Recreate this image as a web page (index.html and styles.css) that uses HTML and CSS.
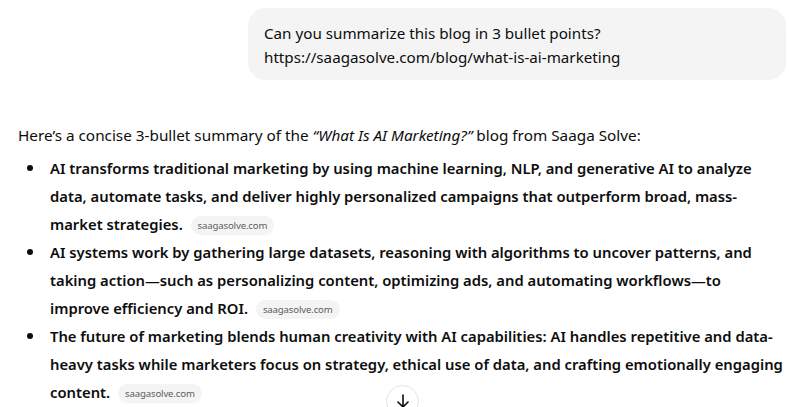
FILE: index.html
```html
<!DOCTYPE html>
<html lang="en">
<head>
<meta charset="utf-8">
<title>Chat</title>
<link rel="stylesheet" href="styles.css">
</head>
<body>
<main class="thread">
  <div class="user-row">
    <div class="bubble">Can you summarize this blog in 3 bullet points?<br>https://saagasolve.com/blog/what-is-ai-marketing</div>
  </div>
  <div class="answer">
    <p class="intro">Here’s a concise 3-bullet summary of the <em>“What Is AI Marketing?”</em> blog from Saaga Solve:</p>
    <ul class="points">
      <li><strong>AI transforms traditional marketing by using machine learning, NLP, and generative AI to analyze data, automate tasks, and deliver highly personalized campaigns that outperform broad, mass-market strategies.</strong> <span class="cite">saagasolve.com</span></li>
      <li><strong>AI systems work by gathering large datasets, reasoning with algorithms to uncover patterns, and taking action—such as personalizing content, optimizing ads, and automating workflows—to <span class="nowrap">improve efficiency</span> and ROI.</strong> <span class="cite">saagasolve.com</span></li>
      <li><strong>The future of marketing blends human creativity with AI capabilities: AI handles repetitive and data-heavy tasks while marketers focus on strategy, ethical use of data, and crafting emotionally engaging content.</strong> <span class="cite">saagasolve.com</span></li>
    </ul>
  </div>
  <button class="scroll-down" aria-label="Scroll down">
    <svg width="18" height="18" viewBox="0 0 18 18" fill="none" stroke="#0d0d0d" stroke-width="1.6" stroke-linecap="round" stroke-linejoin="round"><path d="M9 3v12M4 10l5 5 5-5"/></svg>
  </button>
</main>
</body>
</html>
```
FILE: styles.css
```css
* { box-sizing: border-box; }
html, body { margin: 0; padding: 0; background: #ffffff; }
body {
  font-family: "Noto Sans", "Open Sans", sans-serif;
  color: #0d0d0d;
  font-size: 15.3px;
  width: 789px;
  height: 407px;
  overflow: hidden;
}
.thread { position: relative; height: 407px; }
.user-row {
  display: flex;
  justify-content: flex-end;
  padding: 8px 3px 0 0;
}
.bubble {
  background: #f4f4f4;
  border-radius: 18px;
  padding: 13px 16px 11px 16px;
  width: 538px;
  line-height: 24px;
  font-size: 15.2px;
}
.answer { padding: 0 4px 0 18px; }
.intro {
  margin: 41px 0 5px 0;
  line-height: 28px;
}
.intro em { font-style: italic; }
.points {
  margin: 0;
  padding-left: 32px;
  line-height: 28px;
  font-size: 14.8px;
  list-style: none;
}
.points li { position: relative; }
.points li::before {
  content: "";
  position: absolute;
  left: -23px;
  top: 11px;
  width: 6px;
  height: 6px;
  border-radius: 50%;
  background: #0d0d0d;
}
.points strong { font-weight: 600; }
.nowrap { white-space: nowrap; }
.cite {
  display: inline-flex;
  align-items: center;
  height: 19px;
  padding: 0 7px;
  margin-left: 4px;
  border-radius: 10px;
  background: #f4f4f4;
  color: #5d5d5d;
  font-size: 9.6px;
  letter-spacing: -0.15px;
  line-height: 19px;
  font-weight: 400;
  vertical-align: 1px;
}
.scroll-down {
  position: absolute;
  left: 386px;
  top: 385px;
  width: 33px;
  height: 33px;
  border-radius: 50%;
  border: 1px solid #e3e3e3;
  background: #ffffff;
  display: flex;
  align-items: flex-start;
  justify-content: center;
  padding: 6px 0 0 0;
  cursor: pointer;
}
```
